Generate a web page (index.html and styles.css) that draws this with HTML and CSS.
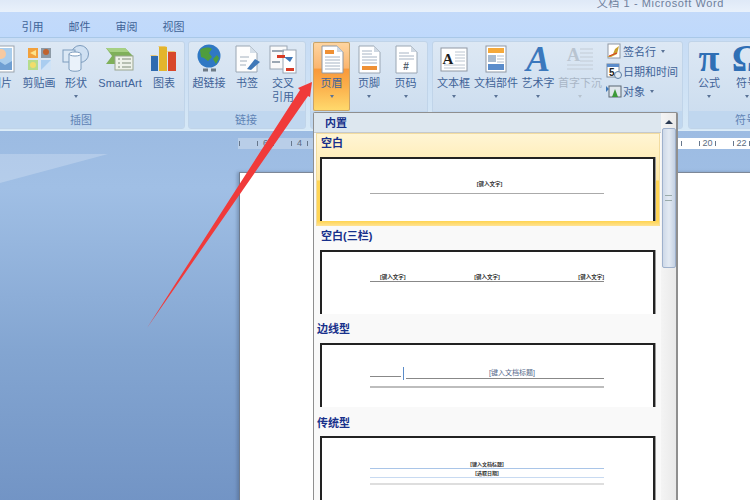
FILE: index.html
```html
<!DOCTYPE html>
<html lang="zh">
<head>
<meta charset="utf-8">
<title>文档 1 - Microsoft Word</title>
<link rel="stylesheet" href="styles.css">
</head>
<body>
<div class="app">
  <div class="titlebar"><span>文档 1 - Microsoft Word</span></div>
  <div class="tabs"><span class="tab">引用</span><span class="tab">邮件</span><span class="tab">审阅</span><span class="tab">视图</span></div>
  <div class="ribbon">
    <section class="group g1">
      <div class="tools">
        <div class="btn w40"><svg class="ico" viewBox="0 0 28 30"><rect x="1" y="2" width="26" height="26" fill="#fff" stroke="#9aa3ad"/><rect x="3" y="4" width="22" height="22" fill="#a9cdec"/><circle cx="14" cy="10" r="5" fill="#f6c9a0"/><path d="M3 26l9-9 6 4 7-4v9z" fill="#6f9fd2"/></svg><span class="lbl">图片</span></div>
        <div class="btn w36"><svg class="ico" viewBox="0 0 28 30"><rect x="3" y="4" width="10" height="10" fill="#f2a13c"/><path d="M5 9l6-3v6z" fill="#fde28a"/><rect x="16" y="4" width="10" height="10" fill="#8d9aa6"/><circle cx="21" cy="8" r="3" fill="#c0622d"/><rect x="3" y="16" width="10" height="10" fill="#b5dc8c"/><circle cx="8" cy="21" r="3" fill="#f1dd6b"/><rect x="16" y="16" width="10" height="10" fill="#a9cdf0"/><path d="M16 26l10-10v10z" fill="#cfe3f7"/></svg><span class="lbl">剪贴画</span></div>
        <div class="btn w38"><svg class="ico" viewBox="0 0 28 30"><circle cx="18" cy="10" r="8.5" fill="#cfe0f2" stroke="#7d9cbd"/><rect x="1" y="6" width="12" height="12" fill="#dbe8f5" stroke="#7d9cbd"/><path d="M7 10h12v15c0 3-12 3-12 0z" fill="#eaf2fa" stroke="#7d9cbd"/><ellipse cx="13" cy="10" rx="6" ry="2" fill="#fff" stroke="#7d9cbd"/></svg><span class="lbl">形状</span><i class="caret"></i></div>
        <div class="btn w50"><svg class="ico" viewBox="0 0 28 30"><path d="M0 4h19l8 8-8 8H0l6-8z" fill="#7fb05a"/><path d="M0 4h19l4 4H4z" fill="#a6d083"/><rect x="9" y="12" width="18" height="14" fill="#eef2ea" stroke="#9aa58f"/><path d="M12 15h2M16 15h9M12 19h2M16 19h9M12 23h2M16 23h9" stroke="#7f8c78"/></svg><span class="lbl">SmartArt</span></div>
        <div class="btn w38"><svg class="ico" viewBox="0 0 28 30"><rect x="1" y="12" width="7" height="15" fill="#2f6bb0"/><rect x="9" y="3" width="8" height="24" fill="#e3b52c"/><rect x="18" y="8" width="8" height="19" fill="#d8472a"/><path d="M8 12l-2-1H0l1 1zM17 3l-2-1H8l1 1zM26 8l-2-1h-7l1 1z" fill="#e8c678"/></svg><span class="lbl">图表</span></div>
      </div>
      <div class="band">插图</div>
    </section>
    <section class="group g2">
      <div class="tools">
        <div class="btn w38"><svg class="ico" viewBox="0 0 28 30"><circle cx="14" cy="12" r="11.5" fill="#2f78c4"/><path d="M5 6c4-3 9-3 12-1l-3 4 3 4-4 4-4-3-3-1zM18 15l4-4 2 3-3 6z" fill="#4f9d3d"/><path d="M8 26h5M16 26h5" stroke="#6d7b88" stroke-width="3" fill="none"/></svg><span class="lbl">超链接</span></div>
        <div class="btn w38"><svg class="ico" viewBox="0 0 28 30"><path d="M3 2h14l7 7v19H3z" fill="#fdfdfd" stroke="#9aa6b3"/><path d="M17 2v7h7z" fill="#d5dfe9"/><path d="M7 13h9M7 17h7M7 21h6" stroke="#a2afbc"/><path d="M14 25l8-10 5 3-9 8z" fill="#3f78b8"/></svg><span class="lbl">书签</span></div>
        <div class="btn w34"><svg class="ico" viewBox="0 0 28 30"><rect x="1" y="2" width="17" height="23" fill="#fafafa" stroke="#9aa6b3"/><rect x="14" y="6" width="13" height="23" fill="#fff" stroke="#9aa6b3"/><path d="M3 7h12M3 18h8" stroke="#9ba7b3" stroke-width="2"/><rect x="8" y="11" width="8" height="3" fill="#d83b25"/><rect x="17" y="24" width="8" height="3" fill="#d83b25"/><path d="M15 13h9l-3 5z" fill="#3f78b8"/></svg><span class="lbl">交叉<br>引用</span></div>
      </div>
      <div class="band">链接</div>
    </section>
    <section class="group g3">
      <div class="tools">
        <div class="btn w37 hot"><svg class="ico" viewBox="0 0 28 30"><path d="M4 2h15l6 6v21H4z" fill="#fff" stroke="#8f98a3"/><path d="M19 2v6h6z" fill="#cfd8e2"/><rect x="7" y="6" width="9" height="4" fill="#ef9034"/><path d="M7 13h15M7 16h15M7 19h15M7 22h15M7 25h15" stroke="#a7b4c4"/></svg><span class="lbl">页眉</span><i class="caret"></i></div>
        <div class="btn w38"><svg class="ico" viewBox="0 0 28 30"><path d="M4 2h15l6 6v21H4z" fill="#fff" stroke="#9aa6b3"/><path d="M19 2v6h6z" fill="#cfd8e2"/><path d="M7 7h10M7 10h10M7 13h15M7 16h15M7 19h15" stroke="#a7b4c4"/><rect x="7" y="22" width="15" height="4" fill="#ef9034"/></svg><span class="lbl">页脚</span><i class="caret"></i></div>
        <div class="btn w35"><svg class="ico" viewBox="0 0 28 30"><path d="M4 2h15l6 6v21H4z" fill="#fff" stroke="#9aa6b3"/><path d="M19 2v6h6z" fill="#cfd8e2"/><path d="M7 9h10M7 12h15M7 15h15" stroke="#a7b4c4"/><text x="14" y="26" class="hash">#</text></svg><span class="lbl">页码</span><i class="caret"></i></div>
      </div>
      <div class="band"></div>
    </section>
    <section class="group g4">
      <div class="tools">
        <div class="btn w37"><svg class="ico" viewBox="0 0 28 30"><rect x="1" y="4" width="26" height="23" fill="#fff" stroke="#8f98a3"/><text x="8" y="20" class="boxa">A</text><path d="M15 8h10M15 11h10M15 14h10M15 17h10M4 21h21M4 24h21" stroke="#bcc6d1"/></svg><span class="lbl">文本框</span><i class="caret"></i></div>
        <div class="btn w48"><svg class="ico" viewBox="0 0 28 30"><rect x="4" y="2" width="20" height="26" fill="#fff" stroke="#8f98a3"/><rect x="6" y="4" width="16" height="5" fill="#f5a93a"/><rect x="6" y="11" width="8" height="7" fill="#a8bbd0"/><path d="M15 12h7M15 15h7M15 18h7" stroke="#b3bfcc"/><rect x="6" y="20" width="16" height="6" fill="#5a8ccb"/></svg><span class="lbl">文档部件</span><i class="caret"></i></div>
        <div class="btn w36"><svg class="ico" viewBox="0 0 28 30"><text x="14" y="27" class="wordart">A</text></svg><span class="lbl">艺术字</span><i class="caret"></i></div>
        <div class="btn w48 off"><svg class="ico" viewBox="0 0 28 30"><text x="1" y="17" class="dropa">A</text><path d="M14 5h13M14 9h13M14 13h13M14 17h13M1 21h26M1 25h26" stroke="#c3ccd6"/></svg><span class="lbl">首字下沉</span><i class="caret"></i></div>
        <div class="rows">
          <div class="row"><svg class="mini" viewBox="0 0 16 16"><rect x="2" y="1" width="12" height="14" fill="#fff" stroke="#8f98a3"/><path d="M1 14l6-3 2-5 4-3-2 8-6 3z" fill="#c9a02e"/><path d="M3 13l8-3" stroke="#d83b25"/></svg><span>签名行</span><i class="caret"></i></div>
          <div class="row"><svg class="mini" viewBox="0 0 16 16"><rect x="1" y="1" width="12" height="13" fill="#fff" stroke="#7d8a99"/><rect x="1" y="1" width="12" height="3" fill="#5a8ccb"/><text x="3" y="13" class="day">5</text><circle cx="12" cy="12" r="3.5" fill="#dfe9f3" stroke="#5a7da3"/></svg><span>日期和时间</span></div>
          <div class="row"><svg class="mini" viewBox="0 0 16 16"><rect x="3" y="3" width="12" height="11" fill="#dfe6ec" stroke="#5b6673"/><path d="M6 14l3-8 3 8z" fill="#3e9a3a"/><path d="M0 3l3 3-3 3z" fill="#3f78b8"/></svg><span>对象</span><i class="caret"></i></div>
        </div>
      </div>
      <div class="band"></div>
    </section>
    <section class="group g5">
      <div class="tools">
        <div class="btn w38"><span class="sym">π</span><span class="lbl">公式</span><i class="caret"></i></div>
        <div class="btn w38"><span class="sym">Ω</span><span class="lbl">符号</span><i class="caret"></i></div>
      </div>
      <div class="band">符号</div>
    </section>
  </div>
  <div class="workspace">
    <div class="ruler">
      <div class="marks"><i></i><i></i><b>6</b><i></i><i></i><b>4</b><i></i></div>
      <div class="marks"><i></i><i></i><b>20</b><i></i><i></i><b>22</b><i></i></div>
    </div>
    <div class="page"></div>
  </div>
  <div class="menu">
    <div class="menu-list">
      <div class="menu-head">内置</div>
      <div class="item active">
        <h3>空白</h3>
        <div class="preview p1"><div class="ph">[键入文字]</div><div class="rule"></div></div>
      </div>
      <div class="item second">
        <h3>空白(三栏)</h3>
        <div class="preview p2"><div class="three"><span>[键入文字]</span><span class="mid">[键入文字]</span><span>[键入文字]</span></div><div class="rule dark"></div></div>
      </div>
      <div class="item third">
        <h3 class="out">边线型</h3>
        <div class="preview p3">
          <div class="sidebar"><span class="short"></span><span class="bar"></span><span class="long">[键入文档标题]</span></div>
          <div class="rule thick"></div>
        </div>
      </div>
      <div class="item fourth">
        <h3 class="out">传统型</h3>
        <div class="preview p4">
          <div class="ph">[键入文档标题]</div><div class="rule blue"></div>
          <div class="ph date">[选取日期]</div><div class="rule pale"></div>
          <div class="rule broad"></div>
        </div>
      </div>
    </div>
    <div class="scroll"><i class="up"></i><div class="thumb"><i></i></div></div>
  </div>
  <svg class="arrow" viewBox="0 0 750 500"><polygon points="147,328 300,90 298,88 312,82 310,97 308,96" fill="#f03a3a"/></svg>
</div>
</body>
</html>
```
FILE: styles.css
```css
* { box-sizing: border-box; }
html, body { margin: 0; padding: 0; }
body { width: 750px; height: 500px; overflow: hidden; font-family: "Liberation Sans", "Noto Sans CJK SC", sans-serif; }
.app { position: relative; width: 750px; height: 500px; overflow: hidden; display: flex; flex-direction: column; background: #9ebce2; }

.titlebar { height: 12px; flex: none; background: linear-gradient(#dfe9f7, #e9f1fb); display: flex; justify-content: flex-end; padding-right: 26px; overflow: hidden; }
.titlebar span { font-size: 11px; line-height: 7px; color: #6f7f9c; letter-spacing: .6px; }

.tabs { height: 26px; flex: none; display: flex; padding-left: 9px; align-items: center; background: linear-gradient(#c3dafa, #bfd9fc); border-bottom: 1px solid #a9c8e8; }
.tab { width: 47px; text-align: center; font-size: 11px; color: #3f6398; padding-top: 2px; }

.ribbon { height: 93px; flex: none; display: flex; gap: 3px; margin-left: -20px; padding-top: 3px; background: linear-gradient(#c7dcf5, #cfe2f5 60%, #d6e8f6); border-bottom: 1px solid #dcecf8; }
.group { flex: none; height: 88px; display: flex; flex-direction: column; border: 1px solid #c0d4e9; border-radius: 3px; background: linear-gradient(#dde8f4, #c9dbee); overflow: hidden; }
.g1 { width: 205px; }
.g2 { width: 118px; padding-left: 1px; }
.g3 { width: 118px; margin-left: 1px; padding-left: 2px; }
.g4 { width: 251px; margin-left: 1px; padding-left: 2px; }
.g5 { width: 118px; margin-left: 2px; padding-left: 1px; }
.tools { display: flex; height: 69px; }
.band { flex: 1; margin-left: -3px; background: #c0d7ef; font-size: 11px; line-height: 18px; text-align: center; color: #5f83b5; }

.btn { flex: none; height: 69px; display: flex; flex-direction: column; align-items: center; padding-top: 2px; font-size: 11px; color: #3f6398; }
.w34 { width: 34px; } .w35 { width: 35px; } .w36 { width: 36px; } .w37 { width: 37px; } .w38 { width: 38px; } .w40 { width: 40px; } .w48 { width: 48px; } .w50 { width: 50px; }
.hot { background: linear-gradient(#fed6a2, #fbb56e 38%, #f9983a 39%, #fbb04c 65%, #ffdb6e); box-shadow: inset 0 0 0 1px #c9a468; border-radius: 2px; }
.off { color: #a9b6c6; }
.ico { width: 28px; height: 30px; flex: none; }
.lbl { margin-top: 2px; line-height: 14px; text-align: center; white-space: nowrap; }
.caret { width: 0; height: 0; margin-top: 5px; border: 2.5px solid transparent; border-top: 3px solid #5a7396; border-bottom: 0; }
.off .caret { border-top-color: #b7c2cf; }
.sym { height: 30px; font-family: "Liberation Serif", serif; font-size: 38px; font-weight: bold; line-height: 28px; color: #2f6fb5; }

.rows { width: 77px; display: flex; flex-direction: column; gap: 4px; padding-top: 1px; padding-left: 2px; }
.row { height: 16px; display: flex; align-items: center; gap: 1px; font-size: 11px; color: #3f6398; white-space: nowrap; }
.row .caret { margin: 0 0 0 4px; }
.mini { width: 16px; height: 16px; flex: none; }

.hash { font-family: "Liberation Sans", sans-serif; font-size: 10px; font-weight: bold; fill: #53606e; text-anchor: middle; }
.boxa { font-family: "Liberation Serif", serif; font-size: 15px; font-weight: bold; fill: #1d1d1d; text-anchor: middle; }
.wordart { font-family: "Liberation Serif", serif; font-size: 36px; font-style: italic; font-weight: bold; fill: #3b78bd; text-anchor: middle; }
.dropa { font-family: "Liberation Serif", serif; font-size: 18px; font-weight: bold; fill: #b9c4d0; }
.day { font-family: "Liberation Sans", sans-serif; font-size: 10px; font-weight: bold; fill: #222; }

.workspace { position: relative; flex: 1; padding: 7px 0 0 238px; background: linear-gradient(#9cbbe2, #a0bfe5 15%, #83a5d1 58%, #7193c4); }
.workspace::before { content: ""; position: absolute; left: 0; top: 23px; width: 108px; height: 29px; background: rgba(255, 255, 255, .22); clip-path: polygon(0 0, 100% 0, 0 100%); }
.ruler { width: 512px; height: 11px; display: flex; justify-content: space-between; background: linear-gradient(90deg, #b9cee8 0, #b9cee8 62%, #fff 62%); }
.marks { display: flex; align-items: center; padding-left: 1px; font-size: 9px; line-height: 11px; color: #5b6b80; }
.marks i { width: 1px; height: 5px; background: #67778c; margin-right: 17px; }
.marks i:last-child { margin-right: 0; }
.marks b { width: 15px; margin-left: -17px; text-align: center; font-weight: normal; }
.page { width: 520px; height: 340px; margin-top: 23px; margin-left: 1px; background: #fff; border-left: 1px solid #6e7b8e; border-top: 1px solid #7d8797; box-shadow: -2px 0 3px rgba(60, 80, 110, .35); }

.menu { position: absolute; left: 313px; top: 112px; width: 365px; height: 388px; display: flex; background: #f9f9f9; border: 1px solid #8f8f8f; border-bottom: 0; border-right-width: 2px; border-radius: 2px 2px 0 0; overflow: hidden; }
.menu-list { width: 347px; flex: none; }
.menu-head { height: 20px; padding-left: 11px; background: #dde7ef; border-bottom: 1px solid #c5c9cd; font-size: 11px; font-weight: bold; line-height: 20px; color: #17308b; }
.item { position: relative; padding-left: 6px; }
.item h3 { margin: 0; height: 23px; padding-left: 1px; font-size: 11px; font-weight: bold; line-height: 19px; color: #17308b; }
.item h3.out { padding-left: 0; margin-left: -3px; }
.item.active { height: 93px; margin: 0 1px 0 2px; padding-left: 3px; background: linear-gradient(#fff5d4, #ffe8a6 50%, #ffd556 51%, #ffd556 95%, #ffe394); border: 1px solid #f2dca0; border-width: 1px 1px 0; }
.active h3 { padding-left: 1px; }
.second { height: 88px; }
.second h3 { height: 24px; line-height: 20px; }
.third { height: 93px; padding-top: 6px; }
.fourth { height: 93px; padding-top: 6px; }
.third h3 { height: 23px; line-height: 18px; }
.fourth h3 { height: 23px; line-height: 20px; }

.preview { width: 335px; height: 64px; background: #fff; border: 2px solid #222; border-bottom: 0; padding: 0 49px 0 48px; box-shadow: 1px 0 0 #999; }
.fourth .preview { height: 70px; }
.ph { height: 6px; font-size: 5px; line-height: 6px; font-weight: bold; text-align: center; color: #333; white-space: nowrap; }
.rule { height: 1px; background: #aaa; }
.p1 { padding-top: 22px; }
.p1 .ph { font-size: 5.5px; padding-left: 5px; }
.p1 .rule { margin-top: 6px; }
.p2 { padding-top: 22px; }
.three { height: 7px; display: flex; justify-content: space-between; padding-left: 10px; font-size: 5.5px; line-height: 6px; font-weight: bold; color: #333; white-space: nowrap; }
.mid { margin-right: 10px; }
.dark { background: #888; }
.p3 { padding-top: 21px; }
.sidebar { display: flex; height: 14px; align-items: flex-end; }
.short { width: 31px; height: 1px; background: #888; margin-bottom: 3px; }
.bar { width: 1px; height: 13px; margin: 0 2px 0 2px; background: #5b8cc9; }
.long { flex: 1; height: 12px; margin-bottom: 1px; border-bottom: 1px solid #888; font-size: 7px; line-height: 9px; padding-top: 1px; text-align: center; color: #55688a; padding-left: 14px; white-space: nowrap; }
.thick { height: 2px; margin-top: 6px; background: #bdbdbd; }
.p4 { padding-top: 23px; }
.blue { margin-top: 1px; background: #a9c5e8; }
.date { margin-top: 1px; }
.pale { margin-top: 1px; background: #c8daf1; }
.broad { height: 2px; margin-top: 5px; background: #dedede; }

.scroll { flex: 1; position: relative; background: linear-gradient(90deg, #f4f4f4, #e9e9e9); display: flex; flex-direction: column; align-items: center; padding-top: 7px; }
.up { width: 0; height: 0; border: 4px solid transparent; border-bottom: 4px solid #2b3a52; border-top: 0; }
.thumb { width: 14px; height: 140px; margin-top: 4px; background: linear-gradient(90deg, #ced9e8, #e3eaf3 50%, #c4d1e3); border: 1px solid #9fb1cc; border-radius: 2px; display: flex; align-items: center; justify-content: center; }
.thumb i { width: 7px; height: 6px; border-top: 1px solid #9aa; border-bottom: 1px solid #9aa; background: linear-gradient(transparent 40%, #9aa 40%, #9aa 60%, transparent 60%); }

.arrow { position: absolute; left: 0; top: 0; width: 750px; height: 500px; pointer-events: none; }
```
